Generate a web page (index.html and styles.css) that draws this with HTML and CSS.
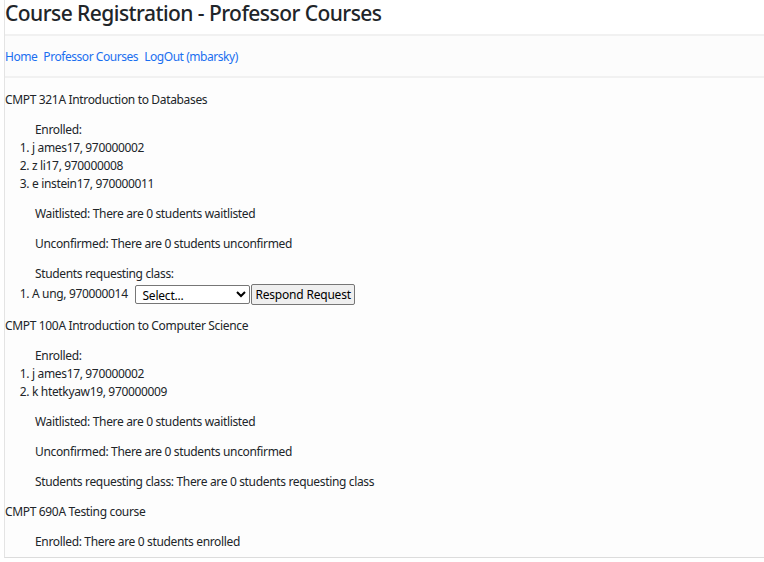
FILE: index.html
```html
<!DOCTYPE html>
<html lang="en">
<head>
<meta charset="utf-8">
<title>Course Registration - Professor Courses</title>
<link rel="stylesheet" href="styles.css">
</head>
<body>
<div class="page">
  <header class="header">
    <h1 class="title">Course Registration - Professor Courses</h1>
  </header>
  <nav class="nav">
    <a href="#" class="nav-link">Home</a>
    <a href="#" class="nav-link">Professor Courses</a>
    <a href="#" class="nav-link">LogOut (mbarsky)</a>
  </nav>
  <main class="main">
    <section class="course">
      <div class="course-title">CMPT 321A Introduction to Databases</div>
      <div class="group">
        <div class="label">Enrolled:</div>
        <ol class="list">
          <li>j ames17, 970000002</li>
          <li>z li17, 970000008</li>
          <li>e instein17, 970000011</li>
        </ol>
      </div>
      <div class="group"><div class="label">Waitlisted: There are 0 students waitlisted</div></div>
      <div class="group"><div class="label">Unconfirmed: There are 0 students unconfirmed</div></div>
      <div class="group">
        <div class="label">Students requesting class:</div>
        <ol class="list">
          <li class="req">A ung, 970000014 <select class="sel"><option>Select...</option><option>Accept</option><option>Decline</option></select><button class="btn">Respond Request</button></li>
        </ol>
      </div>
    </section>
    <section class="course">
      <div class="course-title">CMPT 100A Introduction to Computer Science</div>
      <div class="group">
        <div class="label">Enrolled:</div>
        <ol class="list">
          <li>j ames17, 970000002</li>
          <li>k htetkyaw19, 970000009</li>
        </ol>
      </div>
      <div class="group"><div class="label">Waitlisted: There are 0 students waitlisted</div></div>
      <div class="group"><div class="label">Unconfirmed: There are 0 students unconfirmed</div></div>
      <div class="group"><div class="label">Students requesting class: There are 0 students requesting class</div></div>
    </section>
    <section class="course">
      <div class="course-title">CMPT 690A Testing course</div>
      <div class="group"><div class="label">Enrolled: There are 0 students enrolled</div></div>
    </section>
  </main>
</div>
</body>
</html>
```
FILE: styles.css
```css
html, body {
  margin: 0;
  padding: 0;
  background: #ffffff;
}
body {
  font-family: "Noto Sans", "Open Sans", sans-serif;
  font-size: 12px;
  line-height: 18px;
  letter-spacing: -0.34px;
  color: #212529;
}
.page {
  margin-left: 4px;
  border-left: 1px solid #e4e4e4;
  border-bottom: 1px solid #dcdcdc;
  background: #fdfdfd;
}
.header {
  background: #ffffff;
  border-bottom: 2px solid #f1f1f1;
  padding: 1px 0 8px 0;
}
.title {
  margin: 0;
  font-size: 21px;
  line-height: 25px;
  font-weight: 500;
  letter-spacing: -0.55px;
  color: #212529;
}
.nav {
  display: flex;
  gap: 6px;
  padding: 12px 0 10px 0;
  border-bottom: 2px solid #f1f1f1;
  background: #fcfcfc;
}
.nav-link {
  color: #1a6ff0;
  text-decoration: none;
  letter-spacing: -0.45px;
}
.main {
  padding: 13px 0 6px 0;
}
.course + .course {
  margin-top: 12px;
}
.group {
  margin-top: 12px;
}
.label {
  padding-left: 30px;
}
.list {
  margin: 0;
  padding-left: 27px;
}
.req {
  line-height: 22px;
}
.sel {
  font-family: inherit;
  font-size: 12px;
  letter-spacing: -0.2px;
  width: 115px;
  height: 19px;
  padding: 0 0 0 2px;
  margin-left: 5px;
  border: 1px solid #767676;
  border-radius: 2px;
  background: #ffffff;
  color: #000;
  vertical-align: middle;
}
.btn {
  font-family: inherit;
  font-size: 12px;
  letter-spacing: -0.2px;
  height: 21px;
  padding: 0 3px;
  margin-left: 1px;
  border: 1px solid #767676;
  border-radius: 2px;
  background: #efefef;
  color: #000;
  vertical-align: middle;
}
```
